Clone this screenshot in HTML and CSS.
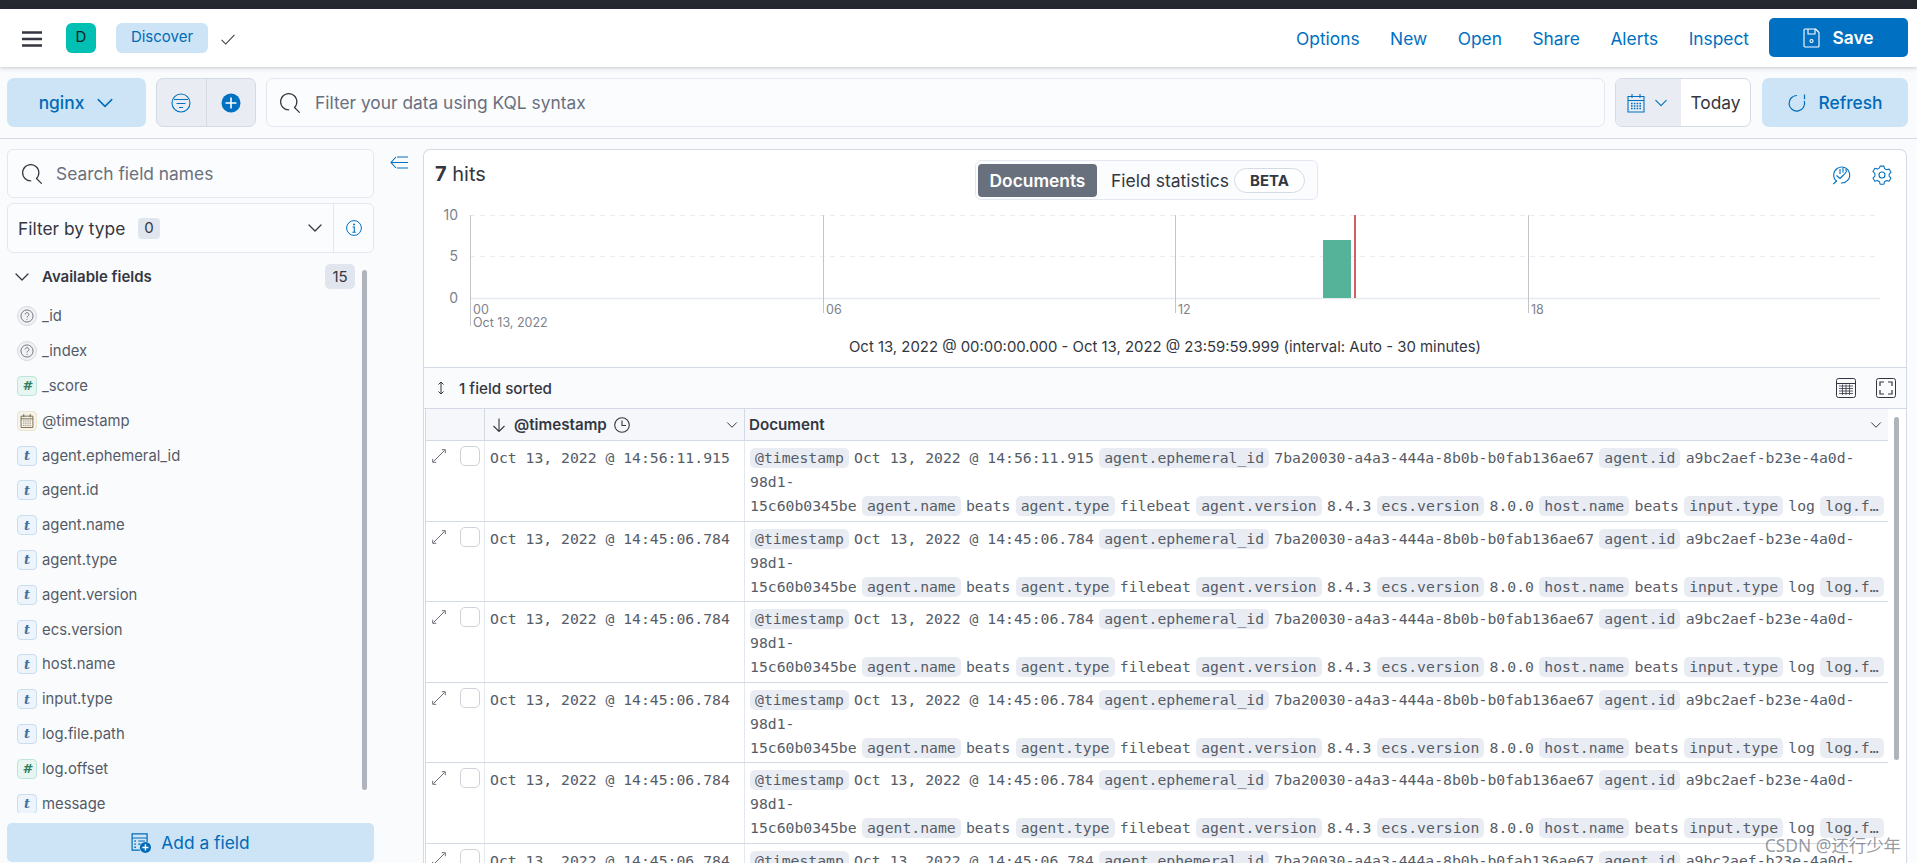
FILE: index.html
```html
<!DOCTYPE html>
<html lang="en">
<head>
<meta charset="utf-8">
<title>Discover - Kibana</title>
<link rel="stylesheet" href="styles.css">
</head>
<body>
<svg class="defs" width="0" height="0" aria-hidden="true">
  <symbol id="i-search" viewBox="0 0 16 16"><path fill="currentColor" d="M11.271 11.978l3.872 3.873a.5.5 0 00.708 0 .5.5 0 000-.708l-3.565-3.564c2.38-2.747 2.267-6.923-.342-9.532-2.73-2.73-7.17-2.73-9.898 0-2.728 2.729-2.728 7.17 0 9.9a6.955 6.955 0 004.949 2.05.5.5 0 000-1 5.96 5.96 0 01-4.242-1.757 6.01 6.01 0 010-8.486c2.337-2.34 6.143-2.34 8.484 0a6.01 6.01 0 010 8.486.5.5 0 00.034.738z"/></symbol>
  <symbol id="i-chev" viewBox="0 0 16 16"><path fill="none" stroke="currentColor" stroke-width="1.3" stroke-linecap="round" stroke-linejoin="round" d="M2 5l6 6 6-6"/></symbol>
  <symbol id="i-expand" viewBox="0 0 14 14"><path fill="none" stroke="currentColor" stroke-width=".85" d="M.7 9.800v3.500h3.500M13.300 4.200V.7H9.800M1.500 12.500L12.500 1.500"/></symbol>
</svg>

<div class="topstrip"></div>

<header class="appbar">
  <svg class="hamburger" viewBox="0 0 20 16"><path fill="none" stroke="#343741" stroke-width="2.4" d="M0 1.500h20M0 8h20M0 14.500h20"/></svg>
  <span class="space-badge">D</span>
  <span class="crumb">Discover</span>
  <svg class="crumb-check" viewBox="0 0 16 12"><path fill="none" stroke="#343741" stroke-width="1.1" d="M1 6.500l4.500 4.500L15 1"/></svg>
  <nav class="appmenu">
    <a>Options</a><a>New</a><a>Open</a><a>Share</a><a>Alerts</a><a>Inspect</a>
  </nav>
  <button class="save">
    <svg class="save-ico" viewBox="0 0 17 20"><path fill="none" stroke="#fff" stroke-width="1.1" stroke-linejoin="round" d="M2 1h10.500L16 4.500V18a1 1 0 0 1-1 1H2a1 1 0 0 1-1-1V2a1 1 0 0 1 1-1zM5 1v5h7V1"/><circle cx="8.500" cy="13" r="1.500" fill="none" stroke="#fff" stroke-width="1.100"/></svg>
    Save
  </button>
</header>

<section class="querybar">
  <button class="index-btn">nginx <svg class="ico14" viewBox="0 0 16 16"><use href="#i-chev"/></svg></button>
  <div class="filter-group">
    <span class="fg-cell">
      <svg class="ico20" viewBox="0 0 20 20"><circle cx="10" cy="10" r="9" fill="none" stroke="#0071c2" stroke-width="1.1"/><path fill="none" stroke="#0071c2" stroke-width="1.1" d="M3 6.500h14M5.500 10.500h9M8 14.500h4"/></svg>
    </span>
    <span class="fg-cell">
      <svg class="ico20" viewBox="0 0 20 20"><circle cx="10" cy="10" r="9.500" fill="#0071c2"/><path fill="none" stroke="#fff" stroke-width="1.6" d="M10 4.500v11M4.500 10h11"/></svg>
    </span>
  </div>
  <div class="kql">
    <svg class="ico20 dark" viewBox="0 0 16 16"><use href="#i-search"/></svg>
    <span>Filter your data using KQL syntax</span>
  </div>
  <div class="datepick">
    <span class="dp-btn">
      <svg class="ico20 blue" viewBox="0 0 18 20"><path fill="none" stroke="currentColor" stroke-width="1.1" d="M1 3.500h16v15.500H1zM1 7.500h16M5 1v4M13 1v4"/><path fill="none" stroke="currentColor" stroke-width="1.4" stroke-dasharray="1.6 1.2" d="M4 10.500h10M4 13h10M4 15.500h10"/></svg>
      <svg class="ico14 blue" viewBox="0 0 16 16"><use href="#i-chev"/></svg>
    </span>
    <span class="dp-val">Today</span>
  </div>
  <button class="refresh">
    <svg class="ico20" viewBox="0 0 20 20"><path fill="none" stroke="#006bb8" stroke-width="1.2" d="M10 2.500A7.800 7.800 0 1 0 17.300 8M17.500 1.500v4.800"/></svg>
    Refresh
  </button>
</section>

<main class="workspace">
  <aside class="sidebar">
    <span class="side-thumb"></span>
    <div class="side-search">
      <svg class="ico20 dark" viewBox="0 0 16 16"><use href="#i-search"/></svg>
      <span>Search field names</span>
    </div>
    <div class="side-filter">
      <span class="sf-label">Filter by type</span>
      <span class="sf-count">0</span>
      <svg class="ico16 sf-chev" viewBox="0 0 16 16"><use href="#i-chev"/></svg>
      <span class="sf-info">
        <svg class="ico16" viewBox="0 0 16 16"><circle cx="8" cy="8" r="7.400" fill="none" stroke="#0071c2"/><circle cx="8" cy="4.600" r="1" fill="#0071c2"/><path fill="none" stroke="#0071c2" stroke-width="1.1" d="M6.600 7h1.700v5M6.400 12.200h3.400"/></svg>
      </span>
    </div>
    <div class="avail-head">
      <svg class="ico16" viewBox="0 0 16 16"><use href="#i-chev"/></svg>
      <strong>Available fields</strong>
      <span class="avail-count">15</span>
    </div>
    <div class="fields">
      <ul class="field-list">
        <li><i class="ft ft-q"><svg viewBox="0 0 12 12"><circle cx="6" cy="6" r="5.200" fill="none" stroke="currentColor" stroke-width=".8"/><path fill="none" stroke="currentColor" stroke-width=".8" d="M4.400 4.700a1.600 1.600 0 1 1 2.400 1.400c-.6.3-.8.6-.8 1.200"/><circle cx="6" cy="8.800" r=".5" fill="currentColor"/></svg></i>_id</li>
        <li><i class="ft ft-q"><svg viewBox="0 0 12 12"><circle cx="6" cy="6" r="5.200" fill="none" stroke="currentColor" stroke-width=".8"/><path fill="none" stroke="currentColor" stroke-width=".8" d="M4.400 4.700a1.600 1.600 0 1 1 2.400 1.400c-.6.3-.8.6-.8 1.200"/><circle cx="6" cy="8.800" r=".5" fill="currentColor"/></svg></i>_index</li>
        <li><i class="ft ft-n">#</i>_score</li>
        <li><i class="ft ft-d"><svg viewBox="0 0 12 13"><path fill="none" stroke="currentColor" stroke-width=".8" d="M.5 2h11v10.500H.5zM.5 4.500h11M3 0v3M9 0v3"/><path fill="none" stroke="currentColor" stroke-width=".8" stroke-dasharray="1 1" d="M2.500 6.500h7M2.500 8.500h7M2.500 10.500h7"/></svg></i>@timestamp</li>
        <li><i class="ft ft-t">t</i>agent.ephemeral_id</li>
        <li><i class="ft ft-t">t</i>agent.id</li>
        <li><i class="ft ft-t">t</i>agent.name</li>
        <li><i class="ft ft-t">t</i>agent.type</li>
        <li><i class="ft ft-t">t</i>agent.version</li>
        <li><i class="ft ft-t">t</i>ecs.version</li>
        <li><i class="ft ft-t">t</i>host.name</li>
        <li><i class="ft ft-t">t</i>input.type</li>
        <li><i class="ft ft-t">t</i>log.file.path</li>
        <li><i class="ft ft-n">#</i>log.offset</li>
        <li><i class="ft ft-t">t</i>message</li>
      </ul>
    </div>
    <button class="add-field">
      <svg class="ico20" viewBox="0 0 18 18"><path fill="none" stroke="#006bb8" stroke-width="1.1" d="M8 15.500H1V.8h13.500V8M1 4.500h13.500"/><path fill="none" stroke="#006bb8" stroke-dasharray="1.4 1.2" stroke-width="1.2" d="M3 7.200h2M3 10h2M3 12.800h2"/><path fill="none" stroke="#006bb8" stroke-width="1.1" d="M6.500 7.200h6M6.500 10h2"/><circle cx="13" cy="13" r="5" fill="#006bb8"/><path stroke="#fff" stroke-width="1.3" d="M13 10.200v5.600M10.200 13h5.600"/></svg>
      Add a field
    </button>
  </aside>

  <div class="collapse-col">
    <svg class="collapse-ico" viewBox="0 0 18 13"><path fill="none" stroke="#0071c2" stroke-width="1.1" d="M6 1L1 6.500 6 12M1 6.500h17M7 1h11M7 12h11"/></svg>
  </div>

  <section class="card">
    <div class="chart-panel">
      <div class="chart-head">
        <span class="hits"><b>7</b> hits</span>
        <div class="toggle">
          <span class="tg-on">Documents</span>
          <span class="tg-off">Field statistics</span>
          <span class="beta">BETA</span>
        </div>
        <div class="chart-tools">
          <svg class="ico20" viewBox="0 0 20 20"><path fill="none" stroke="#0071c2" stroke-width="1.1" d="M5 16.500A8 8 0 1 1 9 18M5 15.500L1.200 19.200M4.500 10.500l3.500 3 3-3 4-4.500"/><path fill="none" stroke="#0071c2" stroke-width="1.1" d="M8 4v5M11 3v4.500M14 4v2"/></svg>
          <svg class="ico20" viewBox="0 0 20 20"><path fill="none" stroke="#0071c2" stroke-width="1.1" stroke-linejoin="round" d="M8 1.200h4l.6 2.600 2.200 1.200 2.600-.8 2 3.400-2 1.900v2.200l2 1.900-2 3.400-2.600-.8-2.200 1.200-.6 2.600H8l-.6-2.600-2.200-1.200-2.600.8-2-3.400 2-1.900V8.700l-2-1.900 2-3.400 2.600.8L7.400 3z" transform="translate(.4 0) scale(.96)"/><circle cx="10" cy="10" r="3" fill="none" stroke="#0071c2" stroke-width="1.1"/></svg>
        </div>
      </div>
      <svg class="histogram" viewBox="0 0 1482 130">
        <g class="grid-dash">
          <line x1="46" x2="1456" y1="10.500" y2="10.500"/>
          <line x1="46" x2="1456" y1="51.500" y2="51.500"/>
        </g>
        <line class="base" x1="46" x2="1456" y1="93.500" y2="93.500"/>
        <g class="ticks">
          <line x1="46.500" x2="46.500" y1="10" y2="121"/>
          <line x1="399.500" x2="399.500" y1="10" y2="108"/>
          <line x1="751.500" x2="751.500" y1="10" y2="108"/>
          <line x1="1104.500" x2="1104.500" y1="10" y2="108"/>
        </g>
        <rect x="899" y="35" width="28" height="58" fill="#54b399"/>
        <rect x="930" y="10" width="2" height="83" fill="#d36060"/>
        <g class="y-labels">
          <text x="34" y="15">10</text>
          <text x="34" y="56">5</text>
          <text x="34" y="98">0</text>
        </g>
        <g class="x-labels">
          <text x="49" y="109">00</text>
          <text x="49" y="122">Oct 13, 2022</text>
          <text x="402" y="109">06</text>
          <text x="754" y="109">12</text>
          <text x="1107" y="109">18</text>
        </g>
      </svg>
      <div class="range">Oct 13, 2022 @ 00:00:00.000 - Oct 13, 2022 @ 23:59:59.999 (interval: Auto - 30 minutes)</div>
    </div>

    <div class="grid-toolbar">
      <svg class="sort-ico" viewBox="0 0 12 14"><path fill="none" stroke="#343741" d="M6 1v12M3.500 3.500L6 1l2.500 2.500M3.500 10.500L6 13l2.500-2.500"/></svg>
      <span class="sorted">1 field sorted</span>
      <svg class="ico20 tb-ico" viewBox="0 0 20 20"><rect x=".5" y=".5" width="19" height="19" rx="2" fill="none" stroke="#343741"/><path fill="none" stroke="#343741" d="M1 5.500h18"/><path fill="none" stroke="#343741" stroke-width=".8" d="M3 8h14M3 10.500h14M3 13h14M3 15.500h14M6.500 6.500v10.500M10 6.500v10.500M13.500 6.500v10.500"/></svg>
      <svg class="ico20 tb-ico" viewBox="0 0 20 20"><rect x=".5" y=".5" width="19" height="19" rx="2" fill="none" stroke="#343741"/><path fill="none" stroke="#343741" stroke-width="1.2" d="M4 8V4h4M12 4h4v4M16 12v4h-4M8 16H4v-4"/></svg>
    </div>

    <div class="grid">
      <div class="grid-thumb"></div>
      <div class="g-head">
        <div class="gh-cell"></div>
        <div class="gh-cell gh-ts">
          <svg class="ico16" viewBox="0 0 16 16"><path fill="none" stroke="#343741" stroke-width="1.1" d="M8 1.500v13M2.500 9L8 14.500 13.500 9"/></svg>
          <b>@timestamp</b>
          <svg class="ico16" viewBox="0 0 16 16"><circle cx="8" cy="8" r="7.300" fill="none" stroke="#343741" stroke-width="1.1"/><path fill="none" stroke="#343741" stroke-width="1.1" d="M8 3.500V8.500h4"/></svg>
          <svg class="ico12 push" viewBox="0 0 16 16"><use href="#i-chev"/></svg>
        </div>
        <div class="gh-cell gh-doc">
          <b>Document</b>
          <svg class="ico12 push" viewBox="0 0 16 16"><use href="#i-chev"/></svg>
        </div>
      </div>

      <div class="g-row">
        <div class="c-ctl"><svg class="exp" viewBox="0 0 14 14"><use href="#i-expand"/></svg><span class="chk"></span></div>
        <div class="c-ts">Oct 13, 2022 @ 14:56:11.915</div>
        <div class="c-doc">
          <div class="ln"><span class="k">@timestamp</span><span>Oct 13, 2022 @ 14:56:11.915</span><span class="k">agent.ephemeral_id</span><span>7ba20030-a4a3-444a-8b0b-b0fab136ae67</span><span class="k">agent.id</span><span>a9bc2aef-b23e-4a0d-</span></div>
          <div class="ln"><span>98d1-</span></div>
          <div class="ln"><span>15c60b0345be</span><span class="k">agent.name</span><span>beats</span><span class="k">agent.type</span><span>filebeat</span><span class="k">agent.version</span><span>8.4.3</span><span class="k">ecs.version</span><span>8.0.0</span><span class="k">host.name</span><span>beats</span><span class="k">input.type</span><span>log</span><span class="k">log.f…</span></div>
        </div>
      </div>
      <div class="g-row">
        <div class="c-ctl"><svg class="exp" viewBox="0 0 14 14"><use href="#i-expand"/></svg><span class="chk"></span></div>
        <div class="c-ts">Oct 13, 2022 @ 14:45:06.784</div>
        <div class="c-doc">
          <div class="ln"><span class="k">@timestamp</span><span>Oct 13, 2022 @ 14:45:06.784</span><span class="k">agent.ephemeral_id</span><span>7ba20030-a4a3-444a-8b0b-b0fab136ae67</span><span class="k">agent.id</span><span>a9bc2aef-b23e-4a0d-</span></div>
          <div class="ln"><span>98d1-</span></div>
          <div class="ln"><span>15c60b0345be</span><span class="k">agent.name</span><span>beats</span><span class="k">agent.type</span><span>filebeat</span><span class="k">agent.version</span><span>8.4.3</span><span class="k">ecs.version</span><span>8.0.0</span><span class="k">host.name</span><span>beats</span><span class="k">input.type</span><span>log</span><span class="k">log.f…</span></div>
        </div>
      </div>
      <div class="g-row">
        <div class="c-ctl"><svg class="exp" viewBox="0 0 14 14"><use href="#i-expand"/></svg><span class="chk"></span></div>
        <div class="c-ts">Oct 13, 2022 @ 14:45:06.784</div>
        <div class="c-doc">
          <div class="ln"><span class="k">@timestamp</span><span>Oct 13, 2022 @ 14:45:06.784</span><span class="k">agent.ephemeral_id</span><span>7ba20030-a4a3-444a-8b0b-b0fab136ae67</span><span class="k">agent.id</span><span>a9bc2aef-b23e-4a0d-</span></div>
          <div class="ln"><span>98d1-</span></div>
          <div class="ln"><span>15c60b0345be</span><span class="k">agent.name</span><span>beats</span><span class="k">agent.type</span><span>filebeat</span><span class="k">agent.version</span><span>8.4.3</span><span class="k">ecs.version</span><span>8.0.0</span><span class="k">host.name</span><span>beats</span><span class="k">input.type</span><span>log</span><span class="k">log.f…</span></div>
        </div>
      </div>
      <div class="g-row">
        <div class="c-ctl"><svg class="exp" viewBox="0 0 14 14"><use href="#i-expand"/></svg><span class="chk"></span></div>
        <div class="c-ts">Oct 13, 2022 @ 14:45:06.784</div>
        <div class="c-doc">
          <div class="ln"><span class="k">@timestamp</span><span>Oct 13, 2022 @ 14:45:06.784</span><span class="k">agent.ephemeral_id</span><span>7ba20030-a4a3-444a-8b0b-b0fab136ae67</span><span class="k">agent.id</span><span>a9bc2aef-b23e-4a0d-</span></div>
          <div class="ln"><span>98d1-</span></div>
          <div class="ln"><span>15c60b0345be</span><span class="k">agent.name</span><span>beats</span><span class="k">agent.type</span><span>filebeat</span><span class="k">agent.version</span><span>8.4.3</span><span class="k">ecs.version</span><span>8.0.0</span><span class="k">host.name</span><span>beats</span><span class="k">input.type</span><span>log</span><span class="k">log.f…</span></div>
        </div>
      </div>
      <div class="g-row">
        <div class="c-ctl"><svg class="exp" viewBox="0 0 14 14"><use href="#i-expand"/></svg><span class="chk"></span></div>
        <div class="c-ts">Oct 13, 2022 @ 14:45:06.784</div>
        <div class="c-doc">
          <div class="ln"><span class="k">@timestamp</span><span>Oct 13, 2022 @ 14:45:06.784</span><span class="k">agent.ephemeral_id</span><span>7ba20030-a4a3-444a-8b0b-b0fab136ae67</span><span class="k">agent.id</span><span>a9bc2aef-b23e-4a0d-</span></div>
          <div class="ln"><span>98d1-</span></div>
          <div class="ln"><span>15c60b0345be</span><span class="k">agent.name</span><span>beats</span><span class="k">agent.type</span><span>filebeat</span><span class="k">agent.version</span><span>8.4.3</span><span class="k">ecs.version</span><span>8.0.0</span><span class="k">host.name</span><span>beats</span><span class="k">input.type</span><span>log</span><span class="k">log.f…</span></div>
        </div>
      </div>
      <div class="g-row g-last">
        <div class="c-ctl"><svg class="exp" viewBox="0 0 14 14"><use href="#i-expand"/></svg><span class="chk"></span></div>
        <div class="c-ts">Oct 13, 2022 @ 14:45:06.784</div>
        <div class="c-doc">
          <div class="ln"><span class="k">@timestamp</span><span>Oct 13, 2022 @ 14:45:06.784</span><span class="k">agent.ephemeral_id</span><span>7ba20030-a4a3-444a-8b0b-b0fab136ae67</span><span class="k">agent.id</span><span>a9bc2aef-b23e-4a0d-</span></div>
        </div>
      </div>
    </div>
  </section>
</main>

<div class="watermark">CSDN @还行少年</div>
</body>
</html>
```
FILE: styles.css
```css
* { box-sizing: border-box; }
html, body { margin: 0; height: 863px; overflow: hidden; }
body {
  position: relative;
  display: flex;
  flex-direction: column;
  background: #fafbfd;
  color: #343741;
  font-family: Inter, "Noto Sans", sans-serif;
  font-size: 17.35px;
}
button { font: inherit; border: 0; cursor: pointer; }
.defs { position: absolute; }
.ico12 { width: 12px; height: 12px; flex: none; }
.ico14 { width: 14px; height: 14px; flex: none; }
.ico16 { width: 16px; height: 16px; flex: none; }
.ico20 { width: 20px; height: 20px; flex: none; }
.dark { color: #343741; }
.blue { color: #0071c2; }

.topstrip { height: 9px; flex: none; background: #25282f; }

.appbar {
  height: 58px;
  flex: none;
  display: flex;
  align-items: center;
  padding: 0 9px 0 22px;
  background: #fff;
  box-shadow: 0 1px 4px rgba(40, 50, 70, .25);
  position: relative;
}
.hamburger { width: 20px; height: 16px; margin-top: 1px; }
.space-badge {
  width: 30px;
  height: 30px;
  margin-left: 24px;
  margin-top: -1px;
  border-radius: 6px;
  background: #00bfb3;
  color: #1a1c21;
  font-size: 15px;
  display: flex;
  align-items: center;
  justify-content: center;
  padding-bottom: 3px;
}
.crumb {
  width: 92px;
  height: 30px;
  margin-left: 20px;
  border-radius: 6px;
  background: #cce4f5;
  color: #006bb8;
  font-size: 15px;
  display: flex;
  align-items: center;
  justify-content: center;
  padding-bottom: 2px;
  margin-top: -1px;
}
.crumb-check { width: 16px; height: 11px; margin-left: 12px; margin-top: 2px; }
.appmenu { margin-left: auto; display: flex; gap: 30.5px; color: #0071c2; }
.save {
  width: 139px;
  height: 39px;
  margin-left: 20px;
  margin-top: -1px;
  border-radius: 5px;
  background: #0071c2;
  color: #fff;
  font-weight: 600;
  display: flex;
  align-items: center;
  justify-content: center;
  gap: 12px;
}
.save-ico { width: 17px; height: 20px; }

.querybar {
  height: 72px;
  flex: none;
  display: flex;
  align-items: center;
  padding: 0 9px 0 7px;
  border-bottom: 1px solid #d3dae6;
}
.index-btn {
  width: 139px;
  height: 49px;
  border-radius: 7px;
  background: #cce4f5;
  color: #006bb8;
  font-weight: 500;
  display: flex;
  align-items: center;
  justify-content: center;
  gap: 12px;
}
.index-btn .ico14 { width: 18px; height: 18px; }
.filter-group {
  width: 100px;
  height: 49px;
  margin-left: 10px;
  display: flex;
  background: #e9edf3;
  border: 1px solid #d3dae6;
  border-radius: 7px;
}
.fg-cell { flex: 1; display: flex; align-items: center; justify-content: center; }
.fg-cell + .fg-cell { border-left: 1px solid #d3dae6; }
.kql {
  flex: 1;
  height: 49px;
  margin-left: 10px;
  display: flex;
  align-items: center;
  gap: 15px;
  padding-left: 13px;
  background: #fbfcfd;
  border: 1px solid #e3e7f0;
  border-radius: 7px;
  color: #69707d;
}
.datepick {
  width: 136px;
  height: 49px;
  margin-left: 10px;
  display: flex;
  border: 1px solid #d3dae6;
  border-radius: 7px;
  overflow: hidden;
  background: #fff;
}
.dp-btn {
  width: 65px;
  display: flex;
  align-items: center;
  padding-left: 10px;
  gap: 8px;
  background: #e9edf3;
}
.dp-val { flex: 1; display: flex; align-items: center; justify-content: center; }
.refresh {
  width: 146px;
  height: 49px;
  margin-left: 11px;
  border-radius: 7px;
  background: #cce4f5;
  color: #006bb8;
  font-weight: 500;
  display: flex;
  align-items: center;
  justify-content: center;
  gap: 11px;
}

.workspace { flex: 1; min-height: 0; display: flex; padding: 10px 10px 0 7px; }

.sidebar { width: 367px; flex: none; display: flex; flex-direction: column; padding-bottom: 1px; position: relative; }
.side-thumb {
  position: absolute;
  left: 355px;
  top: 121px;
  width: 5px;
  height: 520px;
  border-radius: 3px;
  background: #afb3bc;
}
.side-search {
  height: 49px;
  flex: none;
  display: flex;
  align-items: center;
  gap: 14px;
  padding-left: 14px;
  background: #fbfcfd;
  border: 1px solid #e3e7f0;
  border-radius: 6px;
  color: #69707d;
}
.side-filter {
  height: 50px;
  flex: none;
  margin-top: 5px;
  display: flex;
  align-items: center;
  padding-left: 10px;
  background: #fbfcfd;
  border: 1px solid #e3e7f0;
  border-radius: 6px;
}
.sf-count {
  margin-left: 13px;
  padding: 0 6px;
  height: 21px;
  border-radius: 4px;
  background: #e0e5ee;
  font-size: 15px;
  line-height: 19px;
}
.sf-chev { margin-left: auto; margin-right: 10px; }
.sf-info {
  width: 40px;
  align-self: stretch;
  display: flex;
  align-items: center;
  justify-content: center;
  border-left: 1px solid #e3e7f0;
}
.avail-head {
  height: 46px;
  flex: none;
  display: flex;
  align-items: center;
  padding: 1px 19px 0 7px;
}
.avail-head strong { margin-left: 12px; font-size: 15px; font-weight: 600; }
.avail-count {
  margin-left: auto;
  width: 30px;
  height: 25px;
  border-radius: 5px;
  background: #e0e5ee;
  font-size: 15px;
  line-height: 25px;
  text-align: center;
}
.fields { flex: 1; min-height: 0; overflow: hidden; margin-bottom: 10px; }
.field-list { list-style: none; margin: 0; padding: 0 0 0 10px; }
.field-list li {
  height: 34.8px;
  display: flex;
  align-items: center;
  gap: 5px;
  color: #545b68;
  font-size: 14.85px;
}
.ft {
  width: 20px;
  height: 20px;
  flex: none;
  border: 1px solid;
  border-radius: 4px;
  display: flex;
  align-items: center;
  justify-content: center;
  font-family: "DejaVu Serif", serif;
  font-style: italic;
  font-weight: 700;
  font-size: 13px;
}
.ft svg { width: 14px; height: 14px; }
.ft-q { border-radius: 50%; background: #f1f2f4; border-color: #d8d9dd; color: #69707d; }
.ft-n { background: #e8f6f1; border-color: #bde6d8; color: #2f7c62; font-family: "DejaVu Sans", sans-serif; }
.ft-d { background: #f6f3ea; border-color: #ebe5d2; color: #6a5d3f; }
.ft-t { background: #edf4fb; border-color: #c8deef; color: #43709a; }
.add-field {
  height: 39px;
  flex: none;
  border-radius: 5px;
  background: #cce4f5;
  color: #006bb8;
  display: flex;
  align-items: center;
  justify-content: center;
  gap: 10px;
}

.collapse-col { width: 49px; flex: none; padding: 7px 0 0 16px; }
.collapse-ico { width: 18px; height: 13px; display: block; }

.card {
  flex: 1;
  min-width: 0;
  position: relative;
  background: #fff;
  border: 1px solid #d3dae6;
  border-bottom: 0;
  border-radius: 7px 7px 0 0;
  display: flex;
  flex-direction: column;
  overflow: hidden;
}
.chart-panel { height: 218px; flex: none; border-bottom: 1px solid #d3dae6; }
.chart-head { height: 55px; display: flex; padding: 9px 0 0 11px; position: relative; }
.hits { font-size: 20px; line-height: 28px; margin-top: 1px; }
.hits b { font-weight: 700; }
.toggle {
  position: absolute;
  left: 551px;
  top: 10px;
  width: 343px;
  height: 40px;
  display: flex;
  align-items: center;
  padding: 0 2px;
  background: #fbfcfd;
  border: 1px solid #e3e7f0;
  border-radius: 6px;
}
.tg-on {
  width: 119px;
  height: 33px;
  border-radius: 4px;
  background: #69707d;
  color: #fff;
  font-weight: 600;
  display: flex;
  align-items: center;
  justify-content: center;
}
.tg-off { margin-left: 14px; font-size: 17.5px; }
.beta {
  margin-left: 5px;
  width: 71px;
  height: 25px;
  border: 1px solid #d3dae6;
  border-radius: 13px;
  background: #fff;
  font-size: 15px;
  font-weight: 700;
  line-height: 23px;
  text-align: center;
}
.chart-tools { margin-left: auto; display: flex; gap: 20px; padding: 6px 14px 0 0; }
.histogram { display: block; width: 1482px; height: 130px; }
.grid-dash line { stroke: #e9ecf1; stroke-dasharray: 5 5; }
.base { stroke: #e6e9ef; stroke-width: 1.5; }
.ticks line { stroke: #c4c5c9; }
.y-labels text { text-anchor: end; font-size: 14px; fill: #7d828c; }
.x-labels text { font-size: 12.5px; fill: #7d828c; }
.range { text-align: center; font-size: 14.9px; line-height: 24px; }

.grid-toolbar {
  height: 41px;
  flex: none;
  display: flex;
  align-items: center;
  padding: 0 10px 0 11px;
  background: #fafbfd;
  border-bottom: 1px solid #d3dae6;
}
.sort-ico { width: 12px; height: 14px; flex: none; }
.sorted { margin-left: 12px; font-size: 15.2px; font-weight: 500; }
.tb-ico { margin-left: 20px; }
.sorted + .tb-ico { margin-left: auto; }

.grid { flex: 1; min-height: 0; position: relative; font-family: "DejaVu Sans Mono", "Liberation Mono", monospace; font-size: 14.76px; color: #565c67; }
.grid-thumb {
  position: absolute;
  left: 1470px;
  top: 8px;
  width: 5px;
  height: 343px;
  border-radius: 3px;
  background: #afb3bc;
}
.g-head, .g-row {
  display: grid;
  grid-template-columns: 58px 260px 1fr;
  margin: 0 18px 0 1px;
  border-left: 1px solid #d3dae6;
}
.g-head {
  height: 32px;
  background: #f5f7fa;
  border-bottom: 1px solid #d3dae6;
  font-family: Inter, sans-serif;
  font-size: 15.2px;
  color: #343741;
}
.gh-cell { display: flex; align-items: center; border-left: 1px solid #d3dae6; padding: 0 6px; }
.gh-cell:first-child { border-left: 0; }
.gh-cell b { font-weight: 600; }
.gh-ts { gap: 7px; }
.gh-doc { padding-left: 4px; }
.push { margin-left: auto; }
.g-row { height: 80.5px; border-bottom: 1px solid #d3dae6; }
.c-ctl { display: flex; align-items: flex-start; padding: 8px 0 0 6px; }
.exp { width: 14px; height: 14px; color: #4d535e; flex: none; }
.chk {
  width: 20px;
  height: 20px;
  margin-left: 14px;
  margin-top: -3px;
  flex: none;
  border: 1px solid #cfd2d8;
  border-radius: 5px;
  background: #fff;
}
.c-ts, .c-doc { border-left: 1px solid #e3e7f0; padding-top: 5px; line-height: 24px; }
.c-ts { padding-left: 5px; white-space: pre; }
.c-doc { padding-left: 5px; overflow: hidden; }
.ln { display: flex; gap: 5.3px; height: 24px; align-items: center; white-space: pre; }
.k { height: 20px; padding: 0 5px; line-height: 20px; border-radius: 5px; background: #e9edf3; }

.watermark {
  position: absolute;
  right: 16px;
  bottom: 6px;
  font-family: "Noto Sans", "Noto Sans CJK SC", sans-serif;
  font-size: 17.4px;
  color: rgba(80, 85, 95, .6);
}
```
